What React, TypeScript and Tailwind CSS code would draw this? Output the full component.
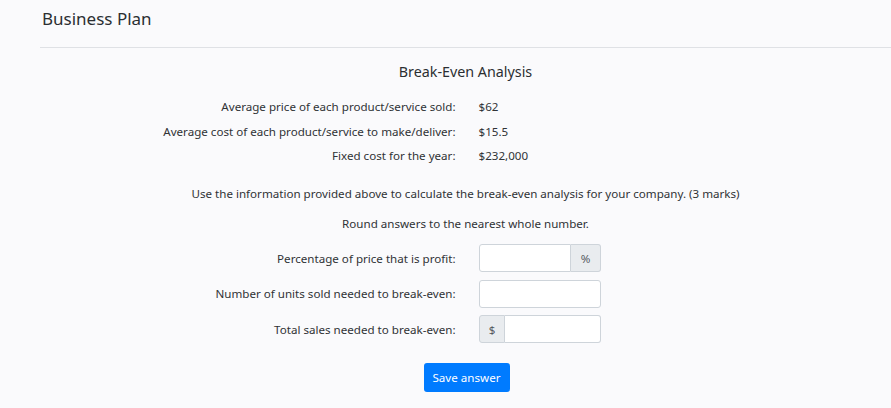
import React from "react";

const font = { fontFamily: '"Noto Sans", "Open Sans", sans-serif' };

function InfoRow({ label, value }: { label: string; value: string }) {
  return (
    <div className="flex h-[24.5px] items-center">
      <div className="w-1/2 pr-[10px] text-right">{label}</div>
      <div className="w-1/2 pl-[13px]">{value}</div>
    </div>
  );
}

function FormRow({ label, children }: { label: string; children: React.ReactNode }) {
  return (
    <div className="flex h-[28px] items-center">
      <div className="w-1/2 pr-[10px] text-right">{label}</div>
      <div className="w-1/2 pl-[13.5px]">{children}</div>
    </div>
  );
}

export default function App() {
  return (
    <div
      className="min-h-[408px] w-full bg-[#fafafc] text-[11.6px] leading-[19px] text-[#303336]"
      style={font}
    >
      <div className="ml-[40px]">
        <div className="flex h-[48px] items-center border-b border-[#dfe1e5]">
          <h1 className="-mt-[10px] ml-[2px] text-[17px] font-normal text-[#2b2e31]">Business Plan</h1>
        </div>
        <h2 className="mt-[14px] text-center text-[14.3px] leading-[19px] text-[#2b2e31]">
          Break-Even Analysis
        </h2>
        <div className="mt-[13.5px]">
          <InfoRow label="Average price of each product/service sold:" value="$62" />
          <InfoRow label="Average cost of each product/service to make/deliver:" value="$15.5" />
          <InfoRow label="Fixed cost for the year:" value="$232,000" />
        </div>
        <p className="mt-[15.5px] text-center">
          Use the information provided above to calculate the break-even analysis for your company. (3 marks)
        </p>
        <p className="mt-[11.5px] text-center">Round answers to the nearest whole number.</p>
        <div className="mt-[11px] flex flex-col gap-[7.5px]">
          <FormRow label="Percentage of price that is profit:">
            <div className="flex h-[28px] w-[122px]">
              <input className="h-full min-w-0 flex-1 rounded-l-[3px] border border-[#ced4da] bg-white outline-none" />
              <span className="flex h-full w-[30px] items-center justify-center rounded-r-[3px] border border-l-0 border-[#ced4da] bg-[#e9ecef] text-[#555a5f]">
                %
              </span>
            </div>
          </FormRow>
          <FormRow label="Number of units sold needed to break-even:">
            <input className="h-[28px] w-[122px] rounded-[3px] border border-[#ced4da] bg-white outline-none" />
          </FormRow>
          <FormRow label="Total sales needed to break-even:">
            <div className="flex h-[28px] w-[122px]">
              <span className="flex h-full w-[26px] items-center justify-center rounded-l-[3px] border border-[#ced4da] bg-[#e9ecef] text-[#555a5f]">
                $
              </span>
              <input className="h-full min-w-0 flex-1 rounded-r-[3px] border border-l-0 border-[#ced4da] bg-white outline-none" />
            </div>
          </FormRow>
        </div>
        <div className="mt-[20px] flex justify-center pl-[2px]">
          <button className="h-[29px] w-[86px] rounded-[3px] bg-[#007bff] text-[11.6px] text-white">
            Save answer
          </button>
        </div>
      </div>
    </div>
  );
}
